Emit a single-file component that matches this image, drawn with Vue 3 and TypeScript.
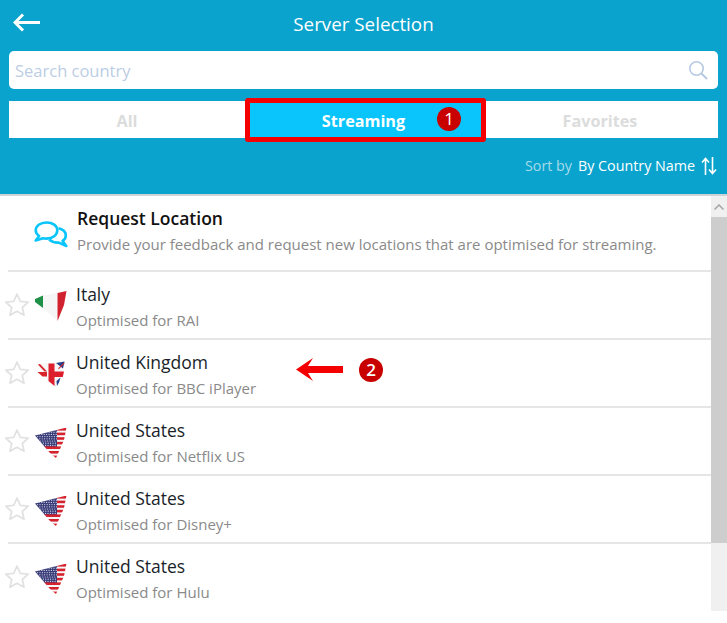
<script setup lang="ts">
interface Row {
  name: string
  sub: string
  flag: 'it' | 'uk' | 'us'
}
const rows: Row[] = [
  { name: 'Italy', sub: 'Optimised for RAI', flag: 'it' },
  { name: 'United Kingdom', sub: 'Optimised for BBC iPlayer', flag: 'uk' },
  { name: 'United States', sub: 'Optimised for Netflix US', flag: 'us' },
  { name: 'United States', sub: 'Optimised for Disney+', flag: 'us' },
  { name: 'United States', sub: 'Optimised for Hulu', flag: 'us' }
]
const stripes = [0, 1, 2, 3, 4, 5, 6]
const dots: { x: number; y: number }[] = []
for (let y = 3; y < 21; y += 2.2) {
  for (let x = 1 + (y % 4); x < 22; x += 2.4) {
    dots.push({ x, y })
  }
}
</script>

<template>
  <div class="page">
    <header class="top">
      <div class="titlebar">
        <svg class="back" width="28" height="20" viewBox="0 0 28 20">
          <path d="M1.500 9.500H27M10 1.500 2 9.500 10 17.500" fill="none" stroke="#fff" stroke-width="3" />
        </svg>
        <h1 class="title">Server Selection</h1>
      </div>
      <div class="search">
        <span class="placeholder">Search country</span>
        <svg width="20" height="20" viewBox="0 0 20 20">
          <circle cx="8.500" cy="8.500" r="6.700" fill="none" stroke="#b5c9e2" stroke-width="1.600" />
          <path d="M13.500 13.500 19 19" stroke="#b5c9e2" stroke-width="2" />
        </svg>
      </div>
      <div class="tabs">
        <div class="tab">All</div>
        <div class="tab active">
          Streaming
          <div class="callout"></div>
          <div class="badge badge-one">1</div>
        </div>
        <div class="tab">Favorites</div>
      </div>
      <div class="sort">
        <span class="sort-label">Sort by</span>
        <span class="sort-value">By Country Name</span>
        <svg width="16" height="18" viewBox="0 0 16 18">
          <path d="M4.500 18V2M1 5.500 4.500 1.500 8 5.500M11.500 0V16M8 12.500 11.500 16.500 15 12.500" fill="none" stroke="#fff" stroke-width="1.600" />
        </svg>
      </div>
    </header>

    <div class="body">
      <main class="list">
        <div class="request">
          <svg class="chat" width="34" height="27" viewBox="0 0 34 27">
            <path d="M12.500 1.500C6.300 1.500 1.700 5 1.700 9.300c0 2.300 1.300 4.300 3.400 5.700L1.700 19.500l7.300-2.200c1.100.2 2.300.3 3.500.3 6.200 0 10.800-3.600 10.800-8.300S18.700 1.500 12.500 1.500Z" fill="none" stroke="#0ac5fb" stroke-width="2.600" stroke-linejoin="round" />
            <path d="M24.500 7.200c4.300 1 7.300 3.900 7.300 7.300 0 2.200-1.200 4.100-3.200 5.400l3.700 5.100-7.500-3.400c-3.800.2-7.300-.9-9.700-3.100" fill="none" stroke="#0ac5fb" stroke-width="2.600" stroke-linejoin="round" />
          </svg>
          <div class="text">
            <div class="req-title">Request Location</div>
            <div class="sub">Provide your feedback and request new locations that are optimised for streaming.</div>
          </div>
        </div>

        <div v-for="(row, i) in rows" :key="i" class="row">
          <svg class="star" width="26" height="25" viewBox="0 0 26 25">
            <path d="M13 2l3.300 7.300 7.900.9-5.900 5.300 1.700 7.800L13 19.300l-7 4 1.700-7.800-5.900-5.300 7.900-.9Z" fill="none" stroke="#e2e2e2" stroke-width="1.800" stroke-linejoin="round" />
          </svg>
          <svg class="flag" width="32" height="32" viewBox="0 0 32 32">
            <defs>
              <clipPath :id="`shape-${i}`">
                <path d="M0 8.500 31.500 .5 29 13 21 31 15 26Z" />
              </clipPath>
            </defs>
            <template v-if="row.flag === 'it'">
              <path d="M0 8 8 4.500V17L0 11Z" fill="#1f9048" />
              <path d="M8 4.500 22 2V29L8 17Z" fill="#f6f6f6" />
              <path d="M22.500 2 31.500 0 29 14 22.500 30Z" fill="#d1232f" />
            </template>
            <template v-else-if="row.flag === 'uk'">
              <path d="M2 5 29.500 2.500 27 15 21 28.500 12 21Z" fill="#f6f6f6" />
              <path d="M21 4 29.500 2.500 28 9.500Z" fill="#27408b" />
              <path d="M23 9.500 29 3.500 29.500 4.500 24 10Z" fill="#d8232a" />
              <path d="M3 5.500 5 5 12 12.500H9.500Z" fill="#d8232a" />
              <path d="M2.500 13H12V17.500H7.500Z" fill="#d8232a" />
              <path d="M13.500 4.500h6V12.500H29L27.800 18H19.500V27L13.500 22Z" fill="#dd1f2d" />
              <path d="M21.500 22 25.500 18.500 24 23.500 22 27Z" fill="#27408b" />
            </template>
            <g v-else :clip-path="`url(#shape-${i})`">
              <rect x="0" y="0" width="32" height="32" fill="#f7f7f7" />
              <rect x="0" y="0" width="22" height="20" fill="#3a3c78" />
              <circle v-for="(d, k) in dots" :key="k" :cx="d.x" :cy="d.y" r=".6" fill="#d6d9ee" />
              <rect v-for="s in stripes" :key="s" :x="s < 4 ? 22 : 0" :y="1 + s * 4.600" :width="s < 4 ? 10 : 32" height="2.600" fill="#d5222f" />
            </g>
          </svg>
          <div class="text">
            <div class="name">{{ row.name }}</div>
            <div class="sub">{{ row.sub }}</div>
          </div>
          <div v-if="row.flag === 'uk'" class="note">
            <svg width="48" height="24" viewBox="0 0 48 24">
              <path d="M0 11.500 17 0 12 8H47V15H12L17 23Z" fill="#f50000" />
            </svg>
            <div class="badge badge-two">2</div>
          </div>
        </div>
      </main>

      <aside class="scroll">
        <div class="scroll-cap">
          <svg width="10" height="6" viewBox="0 0 10 6">
            <path d="M.5 5.500 5 1l4.500 4.500" fill="none" stroke="#a5a5a5" stroke-width="1.500" />
          </svg>
        </div>
        <div class="scroll-thumb"></div>
      </aside>
    </div>
  </div>
</template>

<style>
html,
body {
  margin: 0;
  background: #fff;
}
</style>

<style scoped>
.page {
  width: 727px;
  height: 623px;
  overflow: hidden;
  font-family: "Open Sans", "Noto Sans", sans-serif;
  background: #fff;
}
.top {
  box-sizing: border-box;
  height: 196px;
  padding: 0 9px;
  background: #0aa3cd;
  border-bottom: 2px solid #cfd3d6;
}
.titlebar {
  height: 51px;
  position: relative;
  display: flex;
  justify-content: center;
  align-items: center;
}
.back {
  position: absolute;
  left: 4px;
  top: 13px;
}
.title {
  margin: 0 0 3px 0;
  font-size: 18.800px;
  font-weight: 400;
  color: #fff;
}
.search {
  height: 38px;
  box-sizing: border-box;
  padding: 0 10px 0 6px;
  background: #fff;
  border-radius: 5px;
  display: flex;
  align-items: center;
  justify-content: space-between;
}
.placeholder {
  font-size: 16.500px;
  color: #bccde4;
}
.tabs {
  margin-top: 12px;
  height: 37px;
  display: grid;
  grid-template-columns: 236px 237px 236px;
  background: #fff;
}
.tab {
  position: relative;
  display: flex;
  align-items: center;
  justify-content: center;
  padding-top: 2px;
  font-size: 16.200px;
  font-weight: 700;
  color: #dcdcdc;
}
.active {
  background: #0ac5fb;
  color: #fff;
}
.callout {
  position: absolute;
  left: 0;
  right: -4px;
  top: -3px;
  bottom: -4px;
  border: 5px solid #f50000;
  border-radius: 3px;
}
.badge {
  position: absolute;
  width: 24px;
  height: 24px;
  border-radius: 50%;
  background: #c80000;
  color: #fff;
  font-size: 17px;
  font-weight: 400;
  line-height: 24px;
  text-align: center;
}
.badge-one {
  left: 192px;
  top: 6px;
}
.badge-two {
  left: 63px;
  top: 0;
  font-weight: 600;
}
.sort {
  margin-top: 18px;
  padding-right: 1px;
  display: flex;
  justify-content: flex-end;
  align-items: center;
  font-size: 14.300px;
  color: #fff;
}
.sort-label {
  color: #a5dbea;
  margin-right: 6px;
}
.sort-value {
  margin-right: 6px;
}
.body {
  display: flex;
  height: 415px;
}
.list {
  flex: 1;
  min-width: 0;
  padding-left: 8px;
  overflow: hidden;
}
.request {
  height: 76px;
  box-sizing: border-box;
  border-bottom: 2px solid #e6e6e6;
  display: flex;
  align-items: flex-start;
  padding-left: 26px;
}
.chat {
  margin-top: 25px;
  margin-right: 9px;
}
.text {
  display: flex;
  flex-direction: column;
}
.request .text {
  padding-top: 10px;
}
.req-title {
  font-size: 17.500px;
  font-weight: 600;
  color: #111;
  line-height: 24px;
}
.request .sub {
  margin-top: 4px;
}
.row {
  position: relative;
  height: 68px;
  box-sizing: border-box;
  border-bottom: 2px solid #e6e6e6;
  display: flex;
  align-items: flex-start;
}
.row:last-child {
  border-bottom: none;
}
.star {
  margin: 20px 0 0 -4px;
}
.flag {
  margin: 19px 9px 0 5px;
}
.row .text {
  padding-top: 10px;
}
.name {
  font-size: 17.500px;
  color: #1a1f2a;
  line-height: 24px;
}
.sub {
  font-size: 15px;
  color: #8a8a8a;
  line-height: 20px;
}
.row .sub {
  margin-top: 4px;
}
.note {
  position: absolute;
  left: 288px;
  top: 18px;
}
.scroll {
  width: 16px;
  height: 415px;
  background: #f0f0f0;
  display: flex;
  flex-direction: column;
}
.scroll-cap {
  height: 21px;
  display: flex;
  align-items: center;
  justify-content: center;
}
.scroll-thumb {
  height: 326px;
  background: #cdcdcd;
}
</style>
